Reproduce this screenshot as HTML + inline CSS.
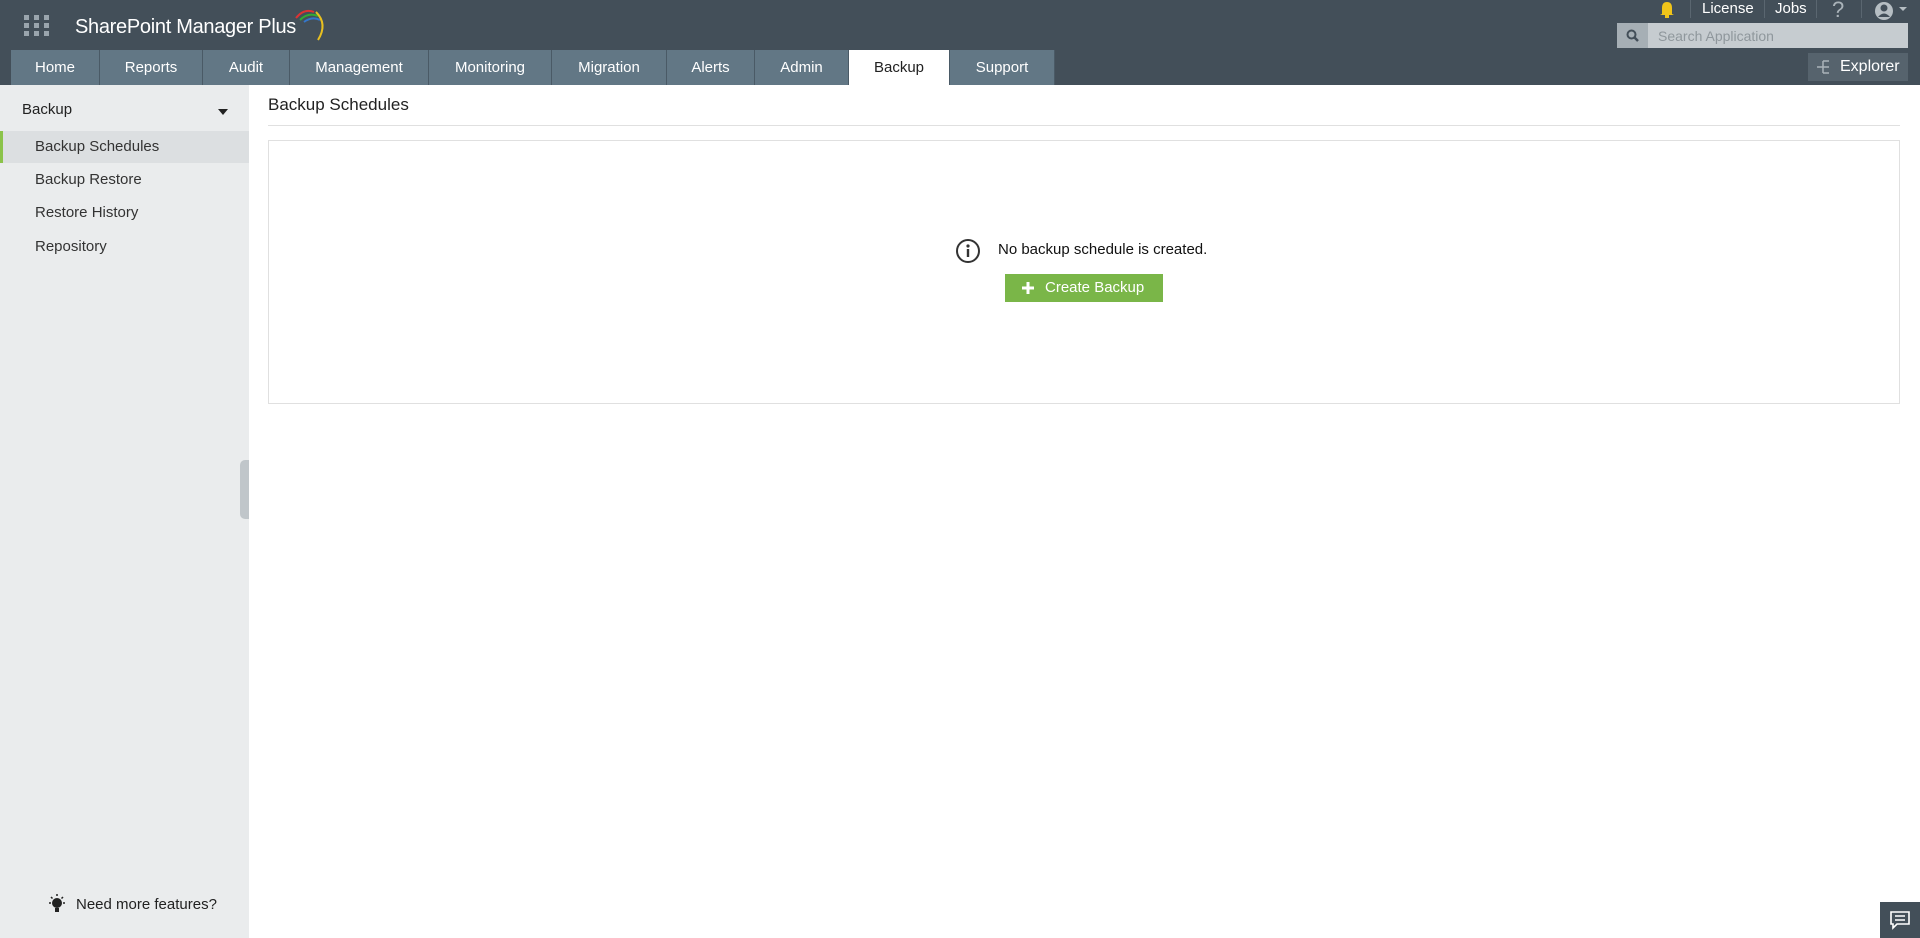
<!DOCTYPE html>
<html><head><meta charset="utf-8"><style>
*{margin:0;padding:0;box-sizing:border-box}
body{width:1920px;height:938px;overflow:hidden;font-family:"Liberation Sans",sans-serif;background:#fff;position:relative}
.hdr{position:absolute;left:0;top:0;width:1920px;height:85px;background:#434f59}
.tabs{position:absolute;left:11px;top:50px;height:35px;display:flex}
.tab{height:35px;line-height:35px;background:#627785;color:#fff;font-size:15px;text-align:center;border-right:1px solid #4a5a66}
.tab.on{background:#fff;color:#222}
.side{position:absolute;left:0;top:85px;width:249px;height:853px;background:#eaeced}
.abs{position:absolute}
</style></head><body>
<div class="hdr">
 <svg class="abs" style="left:24px;top:15px" width="25" height="22"><g fill="#9aa5ad">
 <rect x="0" y="0" width="5" height="5"/><rect x="10" y="0" width="5" height="5"/><rect x="20" y="0" width="5" height="5"/>
 <rect x="0" y="8" width="5" height="5"/><rect x="10" y="8" width="5" height="5"/><rect x="20" y="8" width="5" height="5"/>
 <rect x="0" y="16" width="5" height="5"/><rect x="10" y="16" width="5" height="5"/><rect x="20" y="16" width="5" height="5"/></g></svg>
 <div class="abs" style="left:75px;top:16px;color:#fff;font-size:20px;letter-spacing:-0.3px">SharePoint Manager Plus</div>
 <svg class="abs" style="left:294px;top:6px" width="36" height="36" fill="none" stroke-width="2">
 <path d="M2 12 Q10 2 20 6" stroke="#d33"/><path d="M6 14 Q14 6 24 10" stroke="#3a3"/><path d="M10 16 Q18 10 26 14" stroke="#37c"/><path d="M22 6 Q34 18 24 34" stroke="#e8c020"/></svg>
 <div class="tabs">
  <div class="tab" style="width:89px">Home</div><div class="tab" style="width:103px">Reports</div><div class="tab" style="width:87px">Audit</div><div class="tab" style="width:139px">Management</div><div class="tab" style="width:123px">Monitoring</div><div class="tab" style="width:115px">Migration</div><div class="tab" style="width:88px">Alerts</div><div class="tab" style="width:94px">Admin</div><div class="tab on" style="width:101px">Backup</div><div class="tab" style="width:105px">Support</div>
 </div>
 <svg class="abs" style="left:1658px;top:0" width="18" height="18"><path d="M4 14 V8 Q4 2 9 2 Q14 2 14 8 V14 L16 15 H2 Z" fill="#f0c419"/><rect x="7" y="15" width="4" height="3" fill="#f0c419"/></svg>
 <div class="abs" style="left:1690px;top:0;width:1px;height:18px;background:#5a6670"></div>
 <div class="abs" style="left:1702px;top:0;color:#fff;font-size:15px">License</div>
 <div class="abs" style="left:1764px;top:0;width:1px;height:18px;background:#5a6670"></div>
 <div class="abs" style="left:1775px;top:0;color:#fff;font-size:15px">Jobs</div>
 <div class="abs" style="left:1816px;top:0;width:1px;height:18px;background:#5a6670"></div>
 <div class="abs" style="left:1832px;top:-3px;color:#aab3b9;font-size:22px">?</div>
 <div class="abs" style="left:1861px;top:0;width:1px;height:18px;background:#5a6670"></div>
 <svg class="abs" style="left:1874px;top:0" width="40" height="22"><circle cx="10" cy="11" r="9" fill="#b6bec3"/><circle cx="10" cy="8" r="3.5" fill="#434f59"/><path d="M4 17 Q10 10 16 17" fill="#434f59"/><path d="M25 7 L33 7 L29 11Z" fill="#b6bec3"/></svg>
 <div class="abs" style="left:1617px;top:23px;width:291px;height:25px;background:#c6ccd0"></div>
 <div class="abs" style="left:1617px;top:23px;width:31px;height:25px;background:#a6afb5"></div>
 <svg class="abs" style="left:1626px;top:29px" width="14" height="14"><circle cx="5.5" cy="5.5" r="4" stroke="#434f59" stroke-width="2" fill="none"/><path d="M8.5 8.5 L12 12" stroke="#434f59" stroke-width="2.5"/></svg>
 <div class="abs" style="left:1658px;top:28px;color:#8f979c;font-size:14px">Search Application</div>
 <div class="abs" style="left:1808px;top:53px;width:100px;height:28px;background:#56636d"></div>
 <svg class="abs" style="left:1816px;top:59px" width="18" height="16" stroke="#aab3b9" fill="none" stroke-width="1.5"><path d="M1 8H7M7 2V14M7 2H13M7 8H13M7 14H13"/></svg>
 <div class="abs" style="left:1840px;top:58px;color:#fff;font-size:16px">Explorer</div>
</div>
<div class="side">
 <div class="abs" style="left:22px;top:16px;font-size:15px;color:#222">Backup</div>
 <div class="abs" style="left:218px;top:24px;border:5px solid transparent;border-top:6px solid #222;border-bottom:0"></div>
 <div class="abs" style="left:0;top:46px;width:249px;height:32px;background:#dcdfe1;border-left:3px solid #8bc34a"></div>
 <div class="abs" style="left:35px;top:53px;font-size:15px;color:#333">Backup Schedules</div>
 <div class="abs" style="left:35px;top:86px;font-size:15px;color:#333">Backup Restore</div>
 <div class="abs" style="left:35px;top:119px;font-size:15px;color:#333">Restore History</div>
 <div class="abs" style="left:35px;top:153px;font-size:15px;color:#333">Repository</div>
 <svg class="abs" style="left:48px;top:809px" width="18" height="20"><circle cx="9" cy="9" r="5" fill="#222"/><rect x="7" y="14" width="4" height="4" fill="#222"/><g stroke="#222" stroke-width="1.5"><path d="M9 0V2M1 9H3M15 9H17M3 3L4.5 4.5M15 3L13.5 4.5"/></g></svg>
 <div class="abs" style="left:76px;top:811px;font-size:15px;color:#222">Need more features?</div>
</div>
<div class="abs" style="left:240px;top:460px;width:9px;height:59px;background:#c0c6ca;border-radius:5px 0 0 5px"></div>
<div class="abs" style="left:268px;top:95px;font-size:17px;color:#222">Backup Schedules</div>
<div class="abs" style="left:268px;top:125px;width:1632px;height:1px;background:#e0e0e0"></div>
<div class="abs" style="left:268px;top:140px;width:1632px;height:264px;border:1px solid #e0e0e0"></div>
<svg class="abs" style="left:955px;top:238px" width="26" height="26"><circle cx="13" cy="13" r="11" stroke="#333" stroke-width="2" fill="none"/><circle cx="13" cy="8" r="1.6" fill="#333"/><rect x="11.8" y="11" width="2.4" height="8" fill="#333"/></svg>
<div class="abs" style="left:998px;top:241px;font-size:15px;color:#111">No backup schedule is created.</div>
<div class="abs" style="left:1005px;top:274px;width:158px;height:28px;background:#7ab648"></div>
<svg class="abs" style="left:1022px;top:282px" width="12" height="12"><path d="M6 0V12M0 6H12" stroke="#fff" stroke-width="3"/></svg>
<div class="abs" style="left:1045px;top:279px;font-size:15px;color:#fff">Create Backup</div>
<div class="abs" style="left:1880px;top:902px;width:40px;height:36px;background:#434f59"></div>
<svg class="abs" style="left:1889px;top:910px" width="22" height="20" fill="none" stroke="#fff" stroke-width="1.6"><path d="M2 2H20V14H8L4 18V14H2Z"/><path d="M6 6H16M6 10H16"/></svg>
</body></html>
